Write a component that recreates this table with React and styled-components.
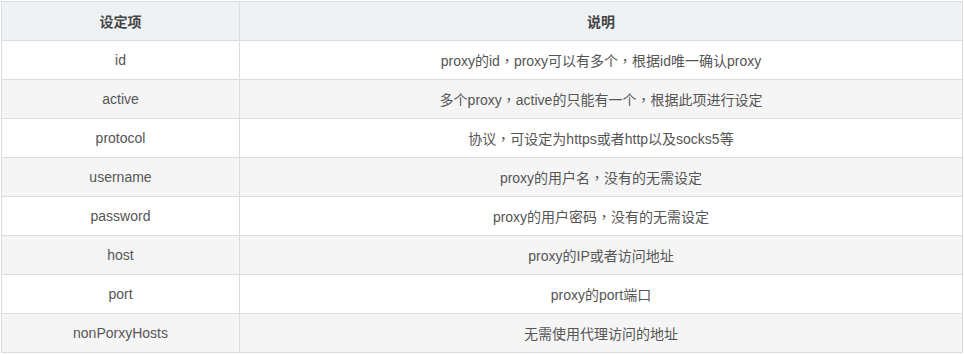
import styled, { createGlobalStyle } from "styled-components";

const GlobalStyle = createGlobalStyle`
  body {
    margin: 1px;
    background: #ffffff;
    font-family: "Liberation Sans", "Noto Sans CJK SC", sans-serif;
  }
`;

const Table = styled.table`
  width: 962px;
  border-collapse: collapse;
  font-size: 14px;
  color: #555;
`;

const HeadCell = styled.th`
  height: 38px;
  padding: 0;
  border: 1px solid #dcdcdc;
  background: #eff2f5;
  color: #444;
  font-weight: bold;
  text-align: center;
  width: ${({ $w }) => $w || "auto"};
`;

const Row = styled.tr`
  background: ${({ $striped }) => ($striped ? "#f5f5f5" : "#ffffff")};
`;

const Cell = styled.td`
  height: 38px;
  padding: 0;
  border: 1px solid #dcdcdc;
  text-align: center;
`;

// full-width comma sits centred in its box, as in the traditional-form glyph
const Comma = styled.span`
  font-family: "Noto Sans CJK TC", sans-serif;
`;

const rows = [
  ["id", "proxy的id，proxy可以有多个，根据id唯一确认proxy"],
  ["active", "多个proxy，active的只能有一个，根据此项进行设定"],
  ["protocol", "协议，可设定为https或者http以及socks5等"],
  ["username", "proxy的用户名，没有的无需设定"],
  ["password", "proxy的用户密码，没有的无需设定"],
  ["host", "proxy的IP或者访问地址"],
  ["port", "proxy的port端口"],
  ["nonPorxyHosts", "无需使用代理访问的地址"],
];

const withCommas = (text) =>
  text.split("，").flatMap((part, i) =>
    i === 0 ? [part] : [<Comma key={i}>，</Comma>, part]
  );

export default function App() {
  return (
    <>
      <GlobalStyle />
      <Table>
        <thead>
          <tr>
            <HeadCell $w="237px">设定项</HeadCell>
            <HeadCell>说明</HeadCell>
          </tr>
        </thead>
        <tbody>
          {rows.map(([key, desc], i) => (
            <Row key={key} $striped={i % 2 === 1}>
              <Cell>{key}</Cell>
              <Cell>{withCommas(desc)}</Cell>
            </Row>
          ))}
        </tbody>
      </Table>
    </>
  );
}
